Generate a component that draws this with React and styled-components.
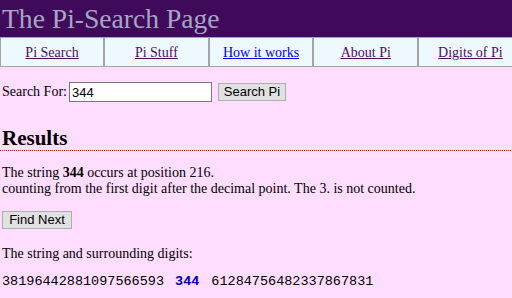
import React from "react";
import styled, { createGlobalStyle } from "styled-components";

const serif = `"Liberation Serif", "Times New Roman", serif`;

const Global = createGlobalStyle`
  html, body { margin: 0; padding: 0; }
  body {
    background: #ffddff;
    font-family: ${serif};
    font-size: 14px;
    color: #000;
    overflow: hidden;
  }
`;

const Header = styled.header`
  background: #400a5a;
  height: 37px;
  padding-left: 2px;
`;

const Title = styled.h1`
  margin: 0;
  font-family: ${serif};
  font-weight: normal;
  font-size: 27.6px;
  line-height: 37px;
  color: #a6a6c4;
  white-space: nowrap;
`;

const Nav = styled.nav`
  display: flex;
  width: 524px;
  border-top: 1px solid #a4a4a4;
  border-bottom: 1px solid #a4a4a4;
  border-left: 1px solid #a4a4a4;
  background: #eef8ff;
`;

const NavCell = styled.div`
  box-sizing: border-box;
  width: ${(p) => (p.$first ? "104px" : "104.7px")};
  flex: none;
  height: 28px;
  border-right: 2px solid #a4a4a4;
  display: flex;
  align-items: center;
  justify-content: center;
  padding-top: 1px;
`;

const NavLink = styled.a`
  font-family: ${serif};
  font-size: 14px;
  color: ${(p) => (p.$visited ? "#4b0f5e" : "#0000ee")};
  text-decoration: underline;
  white-space: nowrap;
`;

const Main = styled.main`
  padding: 0 2px;
`;

const SearchRow = styled.form`
  display: flex;
  align-items: center;
  margin-top: 15px;
  height: 20px;
`;

const Label = styled.label`
  font-family: ${serif};
  font-size: 14px;
  margin-right: 2px;
`;

const Input = styled.input`
  box-sizing: border-box;
  width: 143px;
  height: 20px;
  border: 1px solid #767676;
  background: #fff;
  padding: 0 2px;
  font-family: "Liberation Sans", Arial, sans-serif;
  font-size: 13px;
  color: #000;
  outline: none;
`;

const Button = styled.button`
  box-sizing: border-box;
  height: 18px;
  width: ${(p) => p.$w}px;
  margin-left: ${(p) => p.$ml || 0}px;
  padding: 0;
  background: #e1e1e1;
  border: 1px solid #adadad;
  border-radius: 0;
  font-family: "Liberation Sans", Arial, sans-serif;
  font-size: 13px;
  line-height: 16px;
  color: #000;
`;

const Results = styled.h2`
  margin: 24px -2px 0;
  padding: 0 2px 1px;
  font-family: ${serif};
  font-size: 21px;
  font-weight: bold;
  line-height: 24px;
  background-image: linear-gradient(to right, #ff0000 50%, transparent 50%);
  background-size: 2px 1px;
  background-repeat: repeat-x;
  background-position: left bottom;
`;

const Para = styled.p`
  margin: ${(p) => p.$mt}px 0 0;
  font-family: ${serif};
  line-height: 16px;
  font-size: 14px;
  white-space: nowrap;
`;

const Strong = styled.b`
  font-family: ${serif};
  font-weight: bold;
`;

const ButtonRow = styled.div`
  margin-top: 14px;
  height: 18px;
  display: flex;
`;

const Digits = styled.div`
  margin-top: 12px;
  display: flex;
  font-family: "Liberation Mono", "Courier New", monospace;
  font-size: 13.5px;
  line-height: 16px;
  white-space: pre;
`;

const Hit = styled.b`
  color: #0000aa;
  margin: 0 12px 0 11px;
`;

const navItems = [
  { label: "Pi Search", visited: true },
  { label: "Pi Stuff", visited: true },
  { label: "How it works", visited: false },
  { label: "About Pi", visited: true },
  { label: "Digits of Pi", visited: true },
];

export default function App() {
  return (
    <>
      <Global />
      <Header>
        <Title>The Pi-Search Page</Title>
      </Header>
      <Nav>
        {navItems.map((n, i) => (
          <NavCell key={n.label} $first={i === 0}>
            <NavLink href="#" $visited={n.visited}>
              {n.label}
            </NavLink>
          </NavCell>
        ))}
      </Nav>
      <Main>
        <SearchRow onSubmit={(e) => e.preventDefault()}>
          <Label>Search For:</Label>
          <Input defaultValue="344" />
          <Button type="submit" $w={68} $ml={6}>
            Search Pi
          </Button>
        </SearchRow>
        <Results>Results</Results>
        <Para $mt={14}>
          The string <Strong>344</Strong> occurs at position 216.
          <br />
          counting from the first digit after the decimal point. The 3. is not counted.
        </Para>
        <ButtonRow>
          <Button type="button" $w={70}>
            Find Next
          </Button>
        </ButtonRow>
        <Para $mt={17}>The string and surrounding digits:</Para>
        <Digits>
          <span>38196442881097566593</span>
          <Hit>344</Hit>
          <span>61284756482337867831</span>
        </Digits>
      </Main>
    </>
  );
}
